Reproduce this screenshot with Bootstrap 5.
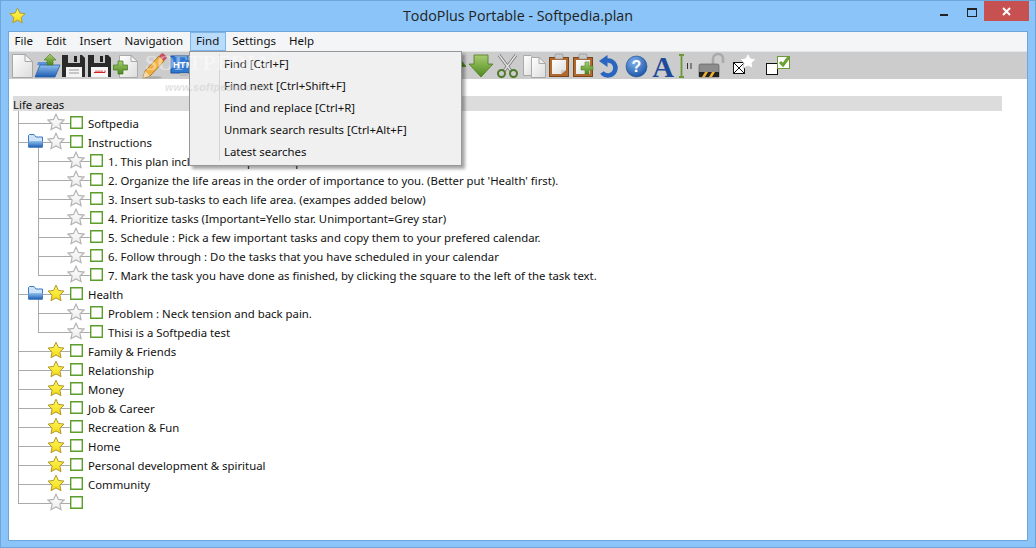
<!DOCTYPE html>
<html lang="en">
<head>
<meta charset="utf-8">
<title>TodoPlus Portable - Softpedia.plan</title>
<link rel="stylesheet" href="https://cdn.jsdelivr.net/npm/bootstrap@5.3.0/dist/css/bootstrap.min.css">
<style>
html,body{height:100%;margin:0;overflow:hidden}
body{font-family:"Noto Sans","DejaVu Sans",sans-serif;font-size:11.37px;color:#111;background:#8ac4f8}
.app-win{height:548px;border:1px solid #6ea6da}
.app-title{height:30px;position:relative}
.app-ico{margin:6px 0 0 8px;display:block}
.app-name{position:absolute;left:0;right:0;top:4px;text-align:center;font-size:14.3px;font-family:"Open Sans",sans-serif;color:#222}
.win-btns{position:absolute;right:6px;top:0;height:20px}
.wb-min{position:absolute;right:81px;top:13px;width:8px;height:2px;background:#222}
.wb-max{position:absolute;right:52px;top:7px;width:10px;height:9px;border:1px solid #222;border-top-width:2px}
.wb-close{width:45px;height:20px;background:#c75050;color:#fff;display:flex;align-items:center;justify-content:center}
.client{margin:0 7px 6px 7px;background:#fff;border:1px solid #6ea6da;position:relative;overflow:hidden}
.menubar{height:19px;background:#f4f5f7;line-height:16px;font-size:11.5px;padding-left:0}
.m-item{padding:0 5.5px;height:19px;border:1px solid transparent;white-space:nowrap}
.m-item:first-child{padding-left:4.5px}
.m-on{background:#b9dcfb;border-color:#7db4e6}
.toolbar{height:28px;background:#ccc;padding-left:1px;border-top:1px solid #e4e4e4}
.toolbar svg{display:block;flex:none;overflow:visible}
.tb-gap{width:246px;flex:none}
.tree-wrap{padding:17px 25px 0 4px}
.tree-head{height:15px;background:#dcdcdc;line-height:18px;font-size:11.37px}
.tree-stub{height:3px;margin-left:5px;width:1px;background:#aaa}
.t-row{height:19px;margin-left:5px;display:flex;align-items:center}
.t-bar{width:20px;height:19px;flex:none;background:linear-gradient(#aaa,#aaa) left top/1px 100% no-repeat}
.t-conn{width:52px;height:19px;flex:none;display:flex;align-items:center;background:linear-gradient(#aaa,#aaa) left top/1px 100% no-repeat,linear-gradient(#aaa,#aaa) left 9px/100% 1px no-repeat}
.t-last{background:linear-gradient(#aaa,#aaa) left top/1px 10px no-repeat,linear-gradient(#aaa,#aaa) left 9px/100% 1px no-repeat}
.t-open{background:linear-gradient(#aaa,#aaa) left top/1px 100% no-repeat,linear-gradient(#aaa,#aaa) left 9px/100% 1px no-repeat,linear-gradient(#aaa,#aaa) 20px 14px/1px 5px no-repeat}
.t-fold{margin:-4px 4px 0 10px;display:block;flex:none}
.t-star{margin-left:29px;display:block;flex:none;margin-top:-4px}
.t-fold + .t-star{margin-left:0}
.t-box{width:13px;height:13px;border:1px solid #5b9e2a;background:#fff;flex:none;margin-top:-2px;box-shadow:inset 0 0 0 .4px #5b9e2a}
.t-txt{margin-left:5px;white-space:nowrap;line-height:19px}
.wm-big{position:absolute;left:136px;top:20px;line-height:1;font-family:"Liberation Serif",serif;font-size:22px;font-weight:700;color:#fff;opacity:.4;white-space:nowrap;pointer-events:none;z-index:6}
.wm-tm{font-size:7px;vertical-align:top;font-family:"Liberation Sans",sans-serif}
.wm-small{position:absolute;left:156px;top:48px;font-family:"Liberation Sans",sans-serif;font-style:italic;font-size:10.5px;font-weight:700;color:#ccc;opacity:.55;white-space:nowrap;letter-spacing:.3px;pointer-events:none;z-index:6}
.find-menu{display:block;position:absolute;left:180px;top:19px;width:273px;height:115px;border:1px solid #979797;border-radius:0;background:#f0f0f0;padding:2px 0 0 0;margin:0;box-shadow:3px 3px 3px rgba(0,0,0,.35);min-width:0;z-index:5}
.find-menu::before{content:"";position:absolute;left:29px;top:2px;bottom:4px;width:1px;background:#d4d4d4}
.find-menu .dropdown-item{height:22px;line-height:20px;padding:0 0 0 34px;color:#111;font-size:11.37px;background:transparent}
</style>
</head>
<body>
<svg width="0" height="0" class="position-absolute">
<defs>
<linearGradient id="gy" x1="0" y1="0" x2="0" y2="1"><stop offset="0" stop-color="#fff668"/><stop offset=".7" stop-color="#f8e42a"/><stop offset="1" stop-color="#f0cc28"/></linearGradient>
<linearGradient id="gw" x1="0" y1="0" x2="0" y2="1"><stop offset="0" stop-color="#fff"/><stop offset="1" stop-color="#ececec"/></linearGradient>
<linearGradient id="gb" x1="0" y1="0" x2="0" y2="1"><stop offset="0" stop-color="#8fc0f0"/><stop offset="1" stop-color="#1c5cb0"/></linearGradient>
<linearGradient id="gg" x1="0" y1="0" x2="0" y2="1"><stop offset="0" stop-color="#a8cc70"/><stop offset="1" stop-color="#4d8a1e"/></linearGradient>
<linearGradient id="gd" x1="0" y1="0" x2="1" y2="1"><stop offset="0" stop-color="#fff"/><stop offset="1" stop-color="#dcdcdc"/></linearGradient>
<radialGradient id="gh" cx=".4" cy=".3" r=".8"><stop offset="0" stop-color="#7fb2ee"/><stop offset="1" stop-color="#134a9e"/></radialGradient>
<symbol id="s-y" viewBox="0 0 18 18"><path d="M9 1.2 11.4 6.4 17 7.1 12.9 11 14 16.7 9 13.9 4 16.7 5.1 11 1 7.1 6.6 6.4Z" fill="url(#gy)" stroke="#b09a28" stroke-width="1"/></symbol>
<symbol id="s-w" viewBox="0 0 18 18"><path d="M9 1.2 11.4 6.4 17 7.1 12.9 11 14 16.7 9 13.9 4 16.7 5.1 11 1 7.1 6.6 6.4Z" fill="url(#gw)" stroke="#b4b4b4" stroke-width="1.2"/></symbol>
<symbol id="s-f" viewBox="0 0 15 14"><path d="M.5 13V1.500L1.500.5H6L8 3H14.500V13Z" fill="#cfe3f8" stroke="#3d78c4"/><path d="M.5 13.500 .5 7H14.500V13.500Z" fill="url(#gb)"/></symbol>
</defs>
</svg>
<div class="app-win d-flex flex-column">
  <div class="app-title">
    <svg class="app-ico" width="17" height="17"><use href="#s-y"/></svg>
    <div class="app-name">TodoPlus Portable - Softpedia.plan</div>
    <div class="win-btns d-flex">
      <span class="wb-min"></span><span class="wb-max"></span>
      <span class="wb-close"><svg width="9" height="9" viewBox="0 0 9 9"><path d="M1 1 8 8M8 1 1 8" stroke="#fff" stroke-width="2"/></svg></span>
    </div>
  </div>
  <div class="client flex-grow-1">
    <div class="menubar d-flex">
      <span class="m-item">File</span><span class="m-item">Edit</span><span class="m-item">Insert</span><span class="m-item">Navigation</span><span class="m-item m-on">Find</span><span class="m-item">Settings</span><span class="m-item">Help</span>
    </div>
    <div class="toolbar d-flex">
      <svg width="24" height="27" viewBox="0 0 24 27"><path d="M2.500 2.500H15L22.500 9.500V25.500H2.500Z" fill="url(#gd)" stroke="#a8a8a8"/><path d="M15 2.500V9.500H22.500Z" fill="#f4f4f4" stroke="#a8a8a8"/></svg>
      <svg width="27" height="27" viewBox="0 0 27 27"><path d="M3 13 4 10H13V14Z" fill="#5b94d8"/><path d="M1 25 6 13H26L21 25Z" fill="url(#gb)" stroke="#2a5ea8" stroke-width=".8"/><path d="M16 2 22 8H19V13H13V8H10Z" fill="url(#gg)" stroke="#4d7a20" stroke-width=".6"/></svg>
      <svg width="26" height="27" viewBox="0 0 26 27"><path d="M1 3H21L24 6V25H1Z" fill="#2a2a2a"/><rect x="7" y="3" width="12" height="8" fill="#c8c8c8"/><rect x="13" y="4" width="3" height="6" fill="#222"/><rect x="5" y="15" width="16" height="10" fill="#f4f4f4"/><path d="M8 18H18M8 21H18" stroke="#999"/></svg>
      <svg width="25" height="27" viewBox="0 0 25 27"><path d="M1 3H21L24 6V25H1Z" fill="#2a2a2a"/><rect x="7" y="3" width="11" height="8" fill="#c8c8c8"/><rect x="13" y="4" width="3" height="6" fill="#222"/><rect x="4" y="15" width="17" height="10" fill="#f6f6f6"/><path d="M7 20.500H18V18.500M9 20.500V18.500M11 20.500V18.500M13 20.500V18.500M15 20.500V18.500" stroke="#d42020" fill="none"/></svg>
      <svg width="27" height="27" viewBox="0 0 27 27"><path d="M7.500 3.500H19L25.500 9.500V25.500H7.500Z" fill="url(#gd)" stroke="#aaa"/><path d="M19 3.500V9.500H25.500Z" fill="#f4f4f4" stroke="#aaa"/><path d="M6 9H11V13H15.500V18H11V22H6V18H1.500V13H6Z" fill="url(#gg)" stroke="#3f7518" stroke-width=".7"/></svg>
      <svg width="29" height="27" viewBox="0 0 29 27"><ellipse cx="13" cy="25.500" rx="10" ry="1.300" fill="#aaa"/><path d="M4 26 6 19 20 4 25 9 11 24Z" fill="#f2b040" stroke="#a06a10" stroke-width=".8"/><path d="M4 26 6 19 11 24Z" fill="#f3d9b0"/><path d="M20 4 22 2C23 1 24 1 25 2L27 4C28 5 28 6 27 7L25 9Z" fill="#c85060"/></svg>
      <svg width="30" height="27" viewBox="0 0 30 27"><rect x="3" y="4" width="25" height="17" fill="#2f78d0" stroke="#1c4f98"/><text x="5" y="16" font-family="Liberation Sans,sans-serif" font-weight="700" font-size="9.500" fill="#fff">HTML</text><rect x="12" y="21" width="8" height="3" fill="#bbb"/></svg>
      <div class="tb-gap"></div>
      <svg width="24" height="27" viewBox="0 0 24 27"><path d="M18 9 22 14V15H18Z" fill="#4d8a1e"/></svg>
      <svg width="26" height="27" viewBox="0 0 26 27"><path d="M6 3H20V12H25L13 25 1 12H6Z" fill="url(#gg)" stroke="#4d7a20" stroke-width=".8"/></svg>
      <svg width="26" height="27" viewBox="0 0 26 27"><path d="M5 3 17 19M22 3 10 19" stroke="#777" stroke-width="3"/><path d="M5 3 17 19M22 3 10 19" stroke="#e2e2e2" stroke-width="1.500"/><circle cx="7.500" cy="21.500" r="3.500" fill="none" stroke="#4f7a2a" stroke-width="2"/><circle cx="19.500" cy="21.500" r="3.500" fill="none" stroke="#4f7a2a" stroke-width="2"/></svg>
      <svg width="27" height="27" viewBox="0 0 27 27"><path d="M3.500 3.500H11L15 7.500V23.500H3.500Z" fill="url(#gd)" stroke="#aaa"/><path d="M11.500 5.500H19L25.500 11.500V25.500H11.500Z" fill="url(#gd)" stroke="#aaa"/><path d="M19 5.500V11.500H25.500Z" fill="#eee" stroke="#aaa"/></svg>
      <svg width="24" height="27" viewBox="0 0 24 27"><rect x="2.500" y="5.500" width="19" height="19" fill="#b06a30" stroke="#7a4518"/><path d="M5 8H19V18L14 22H5Z" fill="url(#gd)"/><path d="M14 22 19 18H14Z" fill="#ccc"/><rect x="8" y="2" width="8" height="5" rx="1" fill="#c8c8c8" stroke="#888" stroke-width=".6"/></svg>
      <svg width="25" height="27" viewBox="0 0 25 27"><rect x="2.500" y="5.500" width="19" height="19" fill="#b06a30" stroke="#7a4518"/><rect x="5" y="8" width="14" height="14" fill="url(#gd)"/><rect x="8" y="2" width="8" height="5" rx="1" fill="#c8c8c8" stroke="#888" stroke-width=".6"/><path d="M14 10H18V14H22V18H18V22H14V18H10V14H14Z" fill="url(#gg)" stroke="#3f7518" stroke-width=".5"/></svg>
      <svg width="27" height="27" viewBox="0 0 27 27"><path d="M11 8.500A7.500 7.500 0 1 1 6 20.500" fill="none" stroke="#2a66c0" stroke-width="4.500"/><path d="M11.500 3V15L3 9Z" fill="#2a66c0"/></svg>
      <svg width="27" height="27" viewBox="0 0 27 27"><circle cx="13.500" cy="14.500" r="10.500" fill="url(#gh)" stroke="#1a4a90" stroke-width=".6"/><text x="13.500" y="20" text-anchor="middle" font-family="Liberation Sans,sans-serif" font-weight="700" font-size="16" fill="#fff">?</text></svg>
      <svg width="26" height="27" viewBox="0 0 26 27"><text x="13" y="25" text-anchor="middle" font-family="Liberation Serif,serif" font-weight="700" font-size="30" fill="#1e4a9a">A</text></svg>
      <svg width="20" height="27" viewBox="0 0 20 27"><path d="M3 3H8M5.500 3V25M3 25H8" stroke="#6a9a38" stroke-width="1.800" fill="none"/><path d="M11.500 11V17M15 11V17" stroke="#333" stroke-width="1"/></svg>
      <svg width="32" height="27" viewBox="0 0 32 27"><path d="M17 12V7C17 3 20 2 22.500 2 25 2 27 4 27 7V11" fill="none" stroke="#aaa" stroke-width="2.600"/><path d="M3 14C3 12 4 12 5 12H21C22 12 23 12 23 14V25H3Z" fill="#8d8d8d" stroke="#555" stroke-width=".6"/><rect x="3" y="20" width="20" height="5" fill="#222"/><path d="M6 25 9 20H12L9 25ZM13 25 16 20H19L16 25Z" fill="#f0b030"/></svg>
      <svg width="35" height="27" viewBox="0 0 35 27"><rect x="5.500" y="10.500" width="11" height="11" fill="#fff" stroke="#111"/><path d="M6 11 16 21M16 11 6 21" stroke="#111"/><path d="M20 1 22.500 6 28 7 24 11 25 16.500 20 14 15 16.500 16 11 12 7 17.500 6Z" fill="#fff" stroke="#ccc"/></svg>
      <svg width="33" height="27" viewBox="0 0 33 27"><rect x="3.500" y="11.500" width="11" height="11" fill="#fff" stroke="#111"/><rect x="14.500" y="4.500" width="12" height="12" fill="#fff" stroke="#6a9a38"/><path d="M17 10 20 13 26 5" fill="none" stroke="#6aa030" stroke-width="3"/></svg>
    </div>
    <div class="tree-wrap">
      <div class="tree-head">Life areas</div>
      <div class="tree-stub"></div>
      <div class="t-row"><span class="t-conn"><svg class="t-star" width="18" height="18"><use href="#s-w"/></svg></span><span class="t-box"></span><span class="t-txt">Softpedia</span></div>
      <div class="t-row"><span class="t-conn t-open"><svg class="t-fold" width="15" height="14"><use href="#s-f"/></svg><svg class="t-star" width="18" height="18"><use href="#s-w"/></svg></span><span class="t-box"></span><span class="t-txt">Instructions</span></div>
      <div class="t-row"><span class="t-bar"></span><span class="t-conn"><svg class="t-star" width="18" height="18"><use href="#s-w"/></svg></span><span class="t-box"></span><span class="t-txt">1. This plan includes a simple example</span></div>
      <div class="t-row"><span class="t-bar"></span><span class="t-conn"><svg class="t-star" width="18" height="18"><use href="#s-w"/></svg></span><span class="t-box"></span><span class="t-txt">2. Organize the life areas in the order of importance to you. (Better put 'Health' first).</span></div>
      <div class="t-row"><span class="t-bar"></span><span class="t-conn"><svg class="t-star" width="18" height="18"><use href="#s-w"/></svg></span><span class="t-box"></span><span class="t-txt">3. Insert sub-tasks to each life area. (exampes added below)</span></div>
      <div class="t-row"><span class="t-bar"></span><span class="t-conn"><svg class="t-star" width="18" height="18"><use href="#s-w"/></svg></span><span class="t-box"></span><span class="t-txt">4. Prioritize tasks (Important=Yello star. Unimportant=Grey star)</span></div>
      <div class="t-row"><span class="t-bar"></span><span class="t-conn"><svg class="t-star" width="18" height="18"><use href="#s-w"/></svg></span><span class="t-box"></span><span class="t-txt">5. Schedule : Pick a few important tasks and copy them to your prefered calendar.</span></div>
      <div class="t-row"><span class="t-bar"></span><span class="t-conn"><svg class="t-star" width="18" height="18"><use href="#s-w"/></svg></span><span class="t-box"></span><span class="t-txt">6. Follow through : Do the tasks that you have scheduled in your calendar</span></div>
      <div class="t-row"><span class="t-bar"></span><span class="t-conn t-last"><svg class="t-star" width="18" height="18"><use href="#s-w"/></svg></span><span class="t-box"></span><span class="t-txt">7. Mark the task you have done as finished, by clicking the square to the left of the task text.</span></div>
      <div class="t-row"><span class="t-conn t-open"><svg class="t-fold" width="15" height="14"><use href="#s-f"/></svg><svg class="t-star" width="18" height="18"><use href="#s-y"/></svg></span><span class="t-box"></span><span class="t-txt">Health</span></div>
      <div class="t-row"><span class="t-bar"></span><span class="t-conn"><svg class="t-star" width="18" height="18"><use href="#s-w"/></svg></span><span class="t-box"></span><span class="t-txt">Problem : Neck tension and back pain.</span></div>
      <div class="t-row"><span class="t-bar"></span><span class="t-conn t-last"><svg class="t-star" width="18" height="18"><use href="#s-w"/></svg></span><span class="t-box"></span><span class="t-txt">Thisi is a Softpedia test</span></div>
      <div class="t-row"><span class="t-conn"><svg class="t-star" width="18" height="18"><use href="#s-y"/></svg></span><span class="t-box"></span><span class="t-txt">Family &amp; Friends</span></div>
      <div class="t-row"><span class="t-conn"><svg class="t-star" width="18" height="18"><use href="#s-y"/></svg></span><span class="t-box"></span><span class="t-txt">Relationship</span></div>
      <div class="t-row"><span class="t-conn"><svg class="t-star" width="18" height="18"><use href="#s-y"/></svg></span><span class="t-box"></span><span class="t-txt">Money</span></div>
      <div class="t-row"><span class="t-conn"><svg class="t-star" width="18" height="18"><use href="#s-y"/></svg></span><span class="t-box"></span><span class="t-txt">Job &amp; Career</span></div>
      <div class="t-row"><span class="t-conn"><svg class="t-star" width="18" height="18"><use href="#s-y"/></svg></span><span class="t-box"></span><span class="t-txt">Recreation &amp; Fun</span></div>
      <div class="t-row"><span class="t-conn"><svg class="t-star" width="18" height="18"><use href="#s-y"/></svg></span><span class="t-box"></span><span class="t-txt">Home</span></div>
      <div class="t-row"><span class="t-conn"><svg class="t-star" width="18" height="18"><use href="#s-y"/></svg></span><span class="t-box"></span><span class="t-txt">Personal development &amp; spiritual</span></div>
      <div class="t-row"><span class="t-conn"><svg class="t-star" width="18" height="18"><use href="#s-y"/></svg></span><span class="t-box"></span><span class="t-txt">Community</span></div>
      <div class="t-row"><span class="t-conn t-last"><svg class="t-star" width="18" height="18"><use href="#s-w"/></svg></span><span class="t-box"></span></div>
    </div>
    <ul class="dropdown-menu find-menu list-unstyled">
      <li class="dropdown-item">Find [Ctrl+F]</li>
      <li class="dropdown-item">Find next [Ctrl+Shift+F]</li>
      <li class="dropdown-item">Find and replace [Ctrl+R]</li>
      <li class="dropdown-item">Unmark search results [Ctrl+Alt+F]</li>
      <li class="dropdown-item">Latest searches</li>
    </ul>
    <div class="wm-big">SOFTPEDIA<span class="wm-tm">™</span></div>
    <div class="wm-small">www.softpedia.com</div>
  </div>
</div>
<script src="https://cdn.jsdelivr.net/npm/bootstrap@5.3.0/dist/js/bootstrap.bundle.min.js"></script>
</body>
</html>
